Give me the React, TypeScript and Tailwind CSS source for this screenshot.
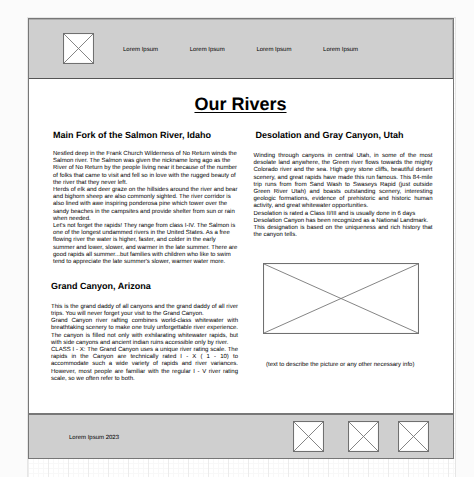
type Row = { text: string; full?: boolean };

const j = (text: string): Row => ({ text, full: true });
const l = (text: string): Row => ({ text });

const salmon: Row[] = [
  l("Nestled deep in the Frank Church Wilderness of No Return winds the"),
  l("Salmon river. The Salmon was given the nickname long ago as the"),
  l("River of No Return by the people living near it because of the number"),
  l("of folks that came to visit and fell so in love with the rugged beauty of"),
  l("the river that they never left."),
  l("Herds of elk and deer graze on the hillsides around the river and bear"),
  l("and bighorn sheep are also commonly sighted. The river corridor is"),
  l("also lined with awe inspiring ponderosa pine which tower over the"),
  l("sandy beaches in the campsites and provide shelter from sun or rain"),
  l("when needed."),
  l("Let's not forget the rapids! They range from class I-IV. The Salmon is"),
  l("one of the longest undammed rivers in the United States. As a free"),
  l("flowing river the water is higher, faster, and colder in the early"),
  l("summer and lower, slower, and warmer in the late summer. There are"),
  l("good rapids all summer...but families with children who like to swim"),
  l("tend to appreciate the late summer's slower, warmer water more."),
];

const grand: Row[] = [
  j("This is the grand daddy of all canyons and the grand daddy of all river"),
  l("trips. You will never forget your visit to the Grand Canyon."),
  j("Grand Canyon river rafting combines world-class whitewater with"),
  j("breathtaking scenery to make one truly unforgettable river experience."),
  j("The canyon is filled not only with exhilarating whitewater rapids, but"),
  l("with side canyons and ancient indian ruins accessible only by river."),
  j("CLASS I - X: The Grand Canyon uses a unique river rating scale. The"),
  j("rapids in the Canyon are technically rated I - X ( 1 - 10) to"),
  j("accommodate such a wide variety of rapids and river variances."),
  j("However, most people are familiar with the regular I - V river rating"),
  l("scale, so we often refer to both."),
];

const desolation: Row[] = [
  j("Winding through canyons in central Utah, in some of the most"),
  j("desolate land anywhere, the Green river flows towards the mighty"),
  j("Colorado river and the sea. High grey stone cliffs, beautiful desert"),
  j("scenery, and great rapids have made this run famous. This 84-mile"),
  j("trip runs from from Sand Wash to Swaseys Rapid (just outside"),
  j("Green River Utah) and boasts outstanding scenery, interesting"),
  j("geologic formations, evidence of prehistoric and historic human"),
  l("activity, and great whitewater opportunities."),
  l("Desolation is rated a Class II/III and is usually done in 6 days"),
  l("Desolation Canyon has been recognized as a National Landmark."),
  j("This designation is based on the uniqueness and rich history that"),
  l("the canyon tells."),
];

function Paragraph({ rows, className }: { rows: Row[]; className: string }) {
  return (
    <div className={`text-[6px] leading-[7.2px] ${className}`}>
      {rows.map((row) => (
        <div
          key={row.text}
          className={row.full ? "[text-align-last:justify]" : "whitespace-nowrap"}
        >
          {row.text}
        </div>
      ))}
    </div>
  );
}

// Wireframe image placeholder: a bordered box crossed by both diagonals.
function Placeholder({ w, h, className = "" }: { w: number; h: number; className?: string }) {
  return (
    <svg width={w} height={h} className={`block shrink-0 ${className}`} fill="none">
      <rect x="0.5" y="0.5" width={w - 1} height={h - 1} fill="#fff" stroke="#707070" strokeWidth="1.1" />
      <path d={`M1 1L${w - 1} ${h - 1}M${w - 1} 1L1 ${h - 1}`} stroke="#777" strokeWidth="0.9" />
    </svg>
  );
}

export default function App() {
  return (
    <div className="h-[477px] w-[474px] overflow-hidden bg-[#fbfbfb] pl-[27px] pt-[17px] font-['Liberation_Sans',Arial,sans-serif] text-black [text-rendering:geometricPrecision]">
      <div className="h-[460px] w-[429px] border-l border-t border-r border-[#e6e6e6] bg-white bg-[linear-gradient(to_right,#ececec_1px,transparent_1px),linear-gradient(to_right,#f8f8f8_1px,transparent_1px),linear-gradient(to_bottom,#f8f8f8_1px,transparent_1px)] bg-[size:20px_20px,5px_5px,5px_5px]">
        <div className="flex h-[441px] w-[426px] flex-col border border-[#777] bg-white">
          <header className="flex h-[60px] shrink-0 items-center border-b border-[#555] bg-[#cfcfcf] pl-[34px] shadow-[inset_0_1px_0_#adadad,inset_-1px_0_0_#adadad]">
            <Placeholder w={31} h={31} className="-mt-px" />
            <nav className="ml-[29px] mt-[3px] flex text-[6px] leading-[7px]">
              <span className="w-[66.7px]">Lorem Ipsum</span>
              <span className="w-[66.7px]">Lorem Ipsum</span>
              <span className="w-[66.7px]">Lorem Ipsum</span>
              <span>Lorem Ipsum</span>
            </nav>
          </header>
          <main className="flex h-[334px] shrink-0 flex-col">
            <h1 className="mt-[15px] pr-[1px] text-center text-[18px] font-bold leading-[20px] underline decoration-[1px] underline-offset-[2px]">
              Our Rivers
            </h1>
            <div className="flex pl-[22px]">
              <section className="w-[202px] shrink-0">
                <h2 className="ml-[2px] mt-[16px] text-[9px] font-bold leading-[11px]">Main Fork of the Salmon River, Idaho</h2>
                <Paragraph rows={salmon} className="ml-[2px] mt-[10px] w-[185px]" />
                <h2 className="mt-[15px] text-[9px] font-bold leading-[11px]">Grand Canyon, Arizona</h2>
                <Paragraph rows={grand} className="mt-[11.5px] w-[187px]" />
              </section>
              <section className="shrink-0">
                <h2 className="ml-[2.5px] mt-[16px] text-[9px] font-bold leading-[11px]">Desolation and Gray Canyon, Utah</h2>
                <Paragraph rows={desolation} className="ml-[0.5px] mt-[12px] w-[179px]" />
                <Placeholder w={156} h={71} className="ml-[10px] mt-[24px]" />
                <p className="ml-[13px] mt-[28px] text-[6px] leading-[7px]">
                  (text to describe the picture or any other necessary info)
                </p>
              </section>
            </div>
          </main>
          <footer className="flex min-h-0 flex-1 items-center border-t-2 border-[#777] bg-[#cfcfcf] pl-[40px]">
            <p className="mt-[4px] w-[224px] text-[6px] leading-[7px]">Lorem Ipsum 2023</p>
            <Placeholder w={31} h={31} />
            <Placeholder w={31} h={31} className="ml-[24px]" />
            <Placeholder w={31} h={31} className="ml-[19px]" />
          </footer>
        </div>
      </div>
    </div>
  );
}
